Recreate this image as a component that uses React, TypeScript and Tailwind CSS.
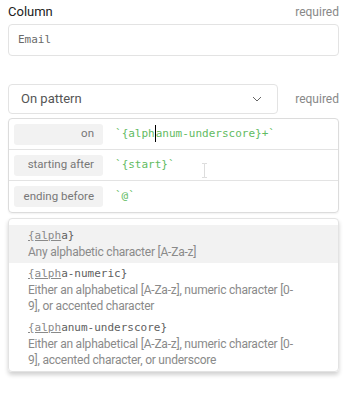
import React from "react";

const mono = "font-['DejaVu_Sans_Mono',monospace]";

function Row({ label, children, last }: { label: string; children: React.ReactNode; last?: boolean }) {
  return (
    <div className={`flex items-center h-[31px] px-[5px] gap-3 ${last ? "" : "border-b border-[#e3e3e3]"}`}>
      <div className="w-[89px] h-[21px] bg-[#f2f2f2] rounded-[3px] flex items-center justify-end pr-[9px] text-[11.5px] text-[#777]">
        {label}
      </div>
      <div className={`${mono} text-[11px] text-[#62bb62]`}>{children}</div>
    </div>
  );
}

function Option({ head, rest, desc, active }: { head: string; rest: string; desc: React.ReactNode; active?: boolean }) {
  return (
    <div className={`pl-[19px] pr-4 py-[3px] ${active ? "bg-[#f2f2f2]" : ""}`}>
      <div className={`${mono} text-[11px] leading-4 text-[#606060]`}>
        <span className="underline text-[#8a8a8a]">{head}</span>
        {rest}
      </div>
      <div className="text-[12px] tracking-[-0.22px] leading-4 text-[#8a8a8a]">{desc}</div>
    </div>
  );
}

export default function App() {
  return (
    <div className="w-[352px] h-[400px] bg-white font-['Roboto',sans-serif] relative">
      <section className="w-[331px] ml-2 pt-[3px]">
        <div className="flex justify-between items-center h-[17px]">
          <p className="text-[13px] text-[#222]">Column</p>
          <p className="text-[12px] text-[#888]">required</p>
        </div>
        <div className={`mt-[4px] h-[32px] border border-[#e3e3e3] rounded-[4px] flex items-center pl-[9px] ${mono} text-[11px] text-[#6a6a6a]`}>
          Email
        </div>

        <div className="flex items-center gap-[17px] mt-7">
          <div className="flex-1 h-[30px] border border-[#e3e3e3] rounded-[4px] flex items-center justify-between pl-3 pr-[15px] text-[13px] text-[#555]">
            On pattern
            <svg width="10" height="6" viewBox="0 0 10 6" fill="none" stroke="#666" strokeWidth="1">
              <polyline points="1,1 5,5 9,1" />
            </svg>
          </div>
          <p className="text-[12px] text-[#888]">required</p>
        </div>

        <div className="mt-[4px] border border-[#dcdcdc] rounded-[4px] shadow-[0_1px_2px_rgba(0,0,0,0.06)]">
          <Row label="on">
            `{"{alph"}
            <span className="inline-block w-px h-[17px] bg-black align-middle -my-1" />
            {"anum-underscore}+"}`
          </Row>
          <Row label="starting after">`{"{start}"}`</Row>
          <Row label="ending before" last>
            `@`
          </Row>
        </div>

        <div className="mt-[5px] border border-[#e3e3e3] rounded-[4px] pt-[6px] pb-0 shadow-[0_3px_4px_rgba(0,0,0,0.18)]">
          <Option head="{alph" rest="a}" desc="Any alphabetic character [A-Za-z]" active />
          <Option
            head="{alph"
            rest="a-numeric}"
            desc={
              <>
                Either an alphabetical [A-Za-z], numeric character [0-
                <br />
                9], or accented character
              </>
            }
          />
          <Option
            head="{alph"
            rest="anum-underscore}"
            desc={
              <>
                Either an alphabetical [A-Za-z], numeric character [0-
                <br />
                9], accented character, or underscore
              </>
            }
          />
        </div>
      </section>

      <svg className="absolute left-[201px] top-[163px]" width="7" height="15" viewBox="0 0 7 15" fill="none" stroke="#ddd" strokeWidth="1">
        <path d="M1 0.5h2.5M3.5 0.5h2.5M3.5 0.5v14M1 14.5h2.5M3.5 14.5h2.5" />
      </svg>
    </div>
  );
}
